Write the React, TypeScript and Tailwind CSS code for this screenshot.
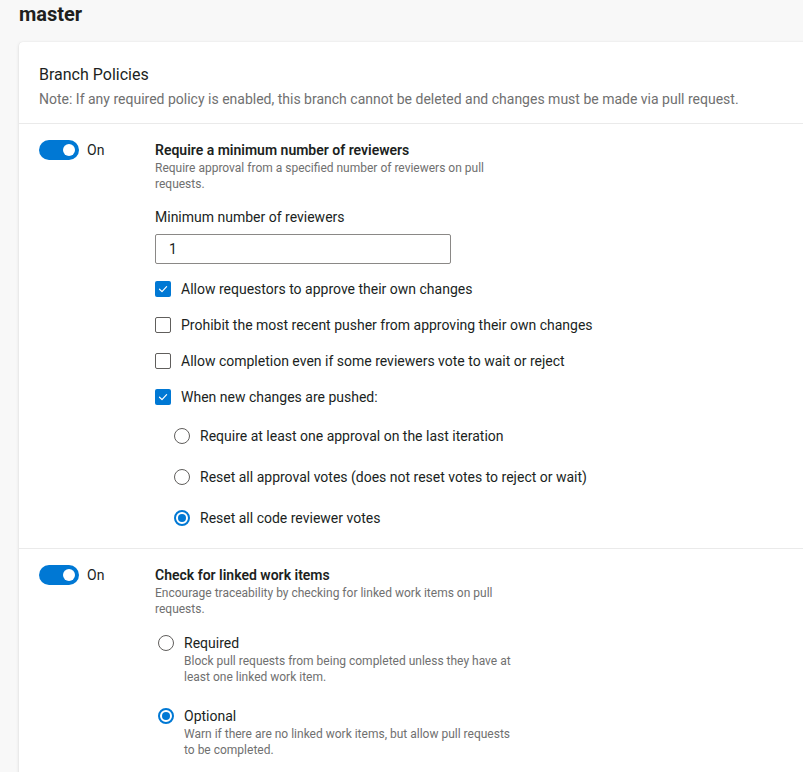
import React from "react";

const FONT = { fontFamily: 'Roboto, "Liberation Sans", sans-serif' };

function Toggle() {
  return (
    <div className="flex items-center gap-2 w-[116px] shrink-0 h-5">
      <div className="w-10 h-5 rounded-full bg-[#0078d4] flex items-center justify-end pr-1">
        <div className="w-3 h-3 rounded-full bg-white" />
      </div>
      <span className="text-[14px] leading-5 text-[#201f1e]">On</span>
    </div>
  );
}

function Checkbox({ checked, label }: { checked: boolean; label: string }) {
  return (
    <div className="flex items-center gap-[10px] h-5">
      {checked ? (
        <div className="w-4 h-4 rounded-[2px] bg-[#0078d4] flex items-center justify-center">
          <svg width="12" height="12" viewBox="0 0 12 12" fill="none">
            <path d="M2.5 6.2 L5 8.6 L9.6 3.6" stroke="white" strokeWidth="1.2" strokeLinecap="round" strokeLinejoin="round" />
          </svg>
        </div>
      ) : (
        <div className="w-4 h-4 rounded-[2px] border border-[#605e5c] bg-white" />
      )}
      <span className="text-[14px] leading-5 text-[#201f1e]">{label}</span>
    </div>
  );
}

function Radio({ checked }: { checked: boolean }) {
  return checked ? (
    <div className="w-4 h-4 rounded-full border-2 border-[#0078d4] flex items-center justify-center shrink-0">
      <div className="w-[8px] h-[8px] rounded-full bg-[#0078d4]" />
    </div>
  ) : (
    <div className="w-4 h-4 rounded-full border border-[#605e5c] bg-white shrink-0" />
  );
}

function RadioRow({ checked, label }: { checked: boolean; label: string }) {
  return (
    <div className="flex items-center gap-[10px] h-5">
      <Radio checked={checked} />
      <span className="text-[14px] leading-5 text-[#201f1e]">{label}</span>
    </div>
  );
}

function RadioDesc({ checked, label, desc }: { checked: boolean; label: string; desc: string }) {
  return (
    <div className="flex gap-[10px] pl-[3px]">
      <div className="h-5 flex items-center">
        <Radio checked={checked} />
      </div>
      <div className="flex flex-col">
        <span className="text-[14px] leading-5 text-[#201f1e]">{label}</span>
        <span className="text-[12px] leading-4 text-[#707070] w-[338px]">{desc}</span>
      </div>
    </div>
  );
}

export default function App() {
  return (
    <div className="w-[803px] h-[772px] overflow-hidden bg-[#f8f8f8]" style={FONT}>
      <div className="pl-[19px]">
        <h1 className="text-[20px] leading-7 font-bold text-[#201f1e] h-7">master</h1>
        <div className="mt-[14px] w-[820px] bg-white rounded-tl-[4px] shadow-[0_1.6px_3.6px_0_rgba(0,0,0,0.13),0_0.3px_0.9px_0_rgba(0,0,0,0.11)]">
          <div className="px-5 pt-[22px] pb-[14px]">
            <div className="text-[16px] leading-[22px] text-[#201f1e]">Branch Policies</div>
            <div className="mt-[3px] text-[14px] leading-5 text-[#707070]">
              Note: If any required policy is enabled, this branch cannot be deleted and changes must be made via pull request.
            </div>
          </div>
          <div className="border-t border-[#eaeaea] px-5 pt-4 pb-5 flex">
            <Toggle />
            <div className="flex flex-col">
              <div className="text-[14px] leading-5 font-semibold text-[#201f1e]">Require a minimum number of reviewers</div>
              <div className="text-[12px] leading-4 text-[#707070] w-[360px]">
                Require approval from a specified number of reviewers on pull requests.
              </div>
              <div className="mt-[15px] text-[14px] leading-5 text-[#201f1e]">Minimum number of reviewers</div>
              <div className="mt-[7px] w-[296px] h-[30px] border border-[#8a8886] rounded-[2px] flex items-center pl-[13px] text-[14px] text-[#201f1e]">
                1
              </div>
              <div className="mt-[15px] flex flex-col gap-4">
                <Checkbox checked label="Allow requestors to approve their own changes" />
                <Checkbox checked={false} label="Prohibit the most recent pusher from approving their own changes" />
                <Checkbox checked={false} label="Allow completion even if some reviewers vote to wait or reject" />
                <Checkbox checked label="When new changes are pushed:" />
              </div>
              <div className="mt-[19px] pl-[19px] flex flex-col gap-[21px]">
                <RadioRow checked={false} label="Require at least one approval on the last iteration" />
                <RadioRow checked={false} label="Reset all approval votes (does not reset votes to reject or wait)" />
                <RadioRow checked label="Reset all code reviewer votes" />
              </div>
            </div>
          </div>
          <div className="border-t border-[#eaeaea] px-5 pt-4 pb-5 flex">
            <Toggle />
            <div className="flex flex-col">
              <div className="text-[14px] leading-5 font-semibold text-[#201f1e]">Check for linked work items</div>
              <div className="text-[12px] leading-4 text-[#707070] w-[360px]">
                Encourage traceability by checking for linked work items on pull requests.
              </div>
              <div className="mt-4 flex flex-col gap-[21px]">
                <RadioDesc
                  checked={false}
                  label="Required"
                  desc="Block pull requests from being completed unless they have at least one linked work item."
                />
                <RadioDesc
                  checked
                  label="Optional"
                  desc="Warn if there are no linked work items, but allow pull requests to be completed."
                />
              </div>
            </div>
          </div>
        </div>
      </div>
    </div>
  );
}
